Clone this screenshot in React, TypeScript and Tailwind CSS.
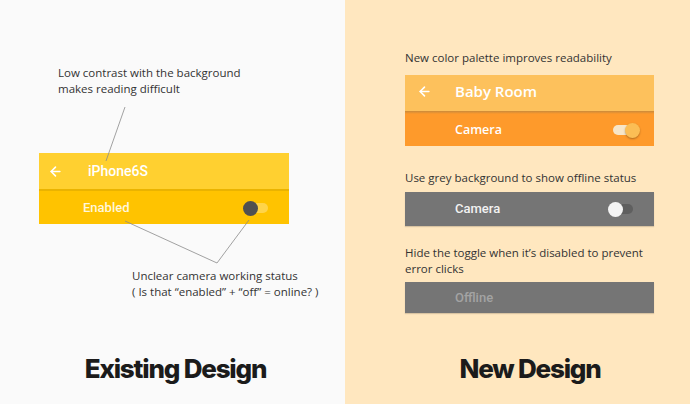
import { ArrowLeft } from 'lucide-react'

const note = 'font-["Open_Sans",sans-serif] text-[11.5px] leading-[16px] text-[#333]'
const title = 'mt-auto pb-[22px] font-["Inter",sans-serif] text-[26px] font-extrabold tracking-[-1.2px] text-[#1b1b1b] text-center leading-none'

function Toggle({ track, thumb, on }: { track: string; thumb: string; on?: boolean }) {
    return (
        <div className="relative w-[24px] h-[14px] flex items-center">
            <div className={`w-[22px] h-[10px] rounded-full ${track}`} />
            <div className={`absolute top-0 ${on ? 'right-[-3px]' : 'left-[-3px]'} w-[15px] h-[15px] rounded-full ${thumb}`} />
        </div>
    )
}

export default function App() {
    return (
        <div className="w-[690px] h-[404px] flex overflow-hidden">
            {/* Existing */}
            <div className="relative w-[345px] h-full bg-[#fafafa] flex flex-col">
                <div className={`${note} pl-[58px] pt-[65px]`}>
                    <p>Low contrast with the background</p>
                    <p>makes reading difficult</p>
                </div>

                <div className="ml-[39px] mt-[56px] w-[250px] font-['Roboto',sans-serif] text-white">
                    <div className="h-[36px] bg-[#ffd030] flex items-center">
                        <ArrowLeft size={15} strokeWidth={2.5} className="ml-[9px]" />
                        <span className="ml-[25px] text-[14px] font-medium">iPhone6S</span>
                    </div>
                    <div className="h-[2px] bg-[#eab300]" />
                    <div className="h-[33px] bg-[#ffc300] flex items-center justify-between pr-[19px]">
                        <span className="ml-[44px] text-[13px] font-medium text-[#fff7dc]">Enabled</span>
                        <Toggle track="bg-[#ffd44a]" thumb="bg-[#505050]" />
                    </div>
                </div>

                <div className={`${note} pl-[132px] mt-[44px]`}>
                    <p>Unclear camera working status</p>
                    <p>( Is that “enabled” + “off” = online? )</p>
                </div>

                <div className={`${title} pl-[6px]`}>Existing Design</div>

                <svg className="absolute inset-0 pointer-events-none" width="345" height="404">
                    <g stroke="#8a8a8a" strokeWidth="0.8" fill="none">
                        <line x1="125" y1="107" x2="106" y2="161" />
                        <line x1="125" y1="221" x2="217" y2="263" />
                        <line x1="249" y1="220" x2="217" y2="263" />
                    </g>
                </svg>
            </div>

            {/* New */}
            <div className="w-[345px] h-full bg-[#ffe7bf] flex flex-col pl-[60px]">
                <p className={`${note} pt-[50px]`}>New color palette improves readability</p>

                <div className="mt-[9px] w-[249px] text-white font-['Open_Sans',sans-serif]">
                    <div className="h-[36px] pb-[3px] bg-[#fdc15c] flex items-center">
                        <ArrowLeft size={15} strokeWidth={2.5} className="ml-[12px]" />
                        <span className="ml-[23px] text-[15px] font-semibold">Baby Room</span>
                    </div>
                    <div className="h-[3px] bg-gradient-to-b from-[#c98a3a] to-[#fe9a2b]" />
                    <div className="h-[32px] bg-[#fe9a2b] flex items-center justify-between pr-[17px]">
                        <span className="ml-[50px] text-[12.5px] font-semibold">Camera</span>
                        <Toggle on track="bg-[#f7e6c8]" thumb="bg-[#fbbe55] shadow-[0_1px_2px_rgba(0,0,0,0.3)]" />
                    </div>
                </div>

                <p className={`${note} mt-[24px]`}>Use grey background to show offline status</p>

                <div className="mt-[6px] w-[249px] h-[34px] bg-[#757575] flex items-center justify-between pr-[19px] font-['Roboto',sans-serif] shadow-[0_1px_1px_rgba(0,0,0,0.15)]">
                    <span className="ml-[50px] text-[13px] font-medium text-[#f2f2f2]">Camera</span>
                    <Toggle track="bg-[#5f5f5f]" thumb="bg-[#f4f4f4]" />
                </div>

                <div className={`${note} mt-[19px]`}>
                    <p>Hide the toggle when it’s disabled to prevent</p>
                    <p>error clicks</p>
                </div>

                <div className="mt-[5px] w-[249px] h-[31px] bg-[#757575] flex items-center font-['Roboto',sans-serif] shadow-[0_1px_1px_rgba(0,0,0,0.15)]">
                    <span className="ml-[50px] text-[13px] font-medium text-[#a3a3a3]">Offline</span>
                </div>

                <div className={`${title} w-[230px] ml-[10px]`}>New Design</div>
            </div>
        </div>
    )
}
